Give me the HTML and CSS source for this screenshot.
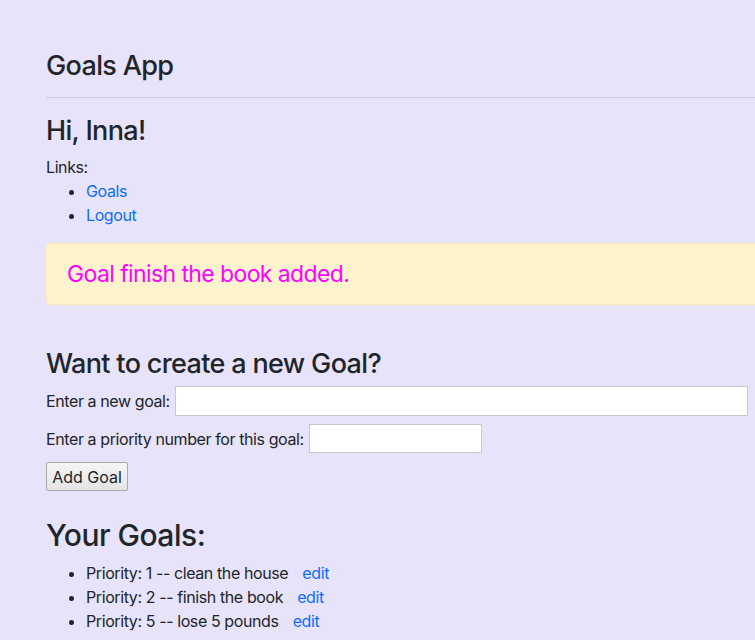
FILE: index.html
```html
<!DOCTYPE html>
<html lang="en">
<head>
<meta charset="utf-8">
<title>Goals App</title>
<link rel="stylesheet" href="styles.css">
</head>
<body>
<div class="page">
  <header class="header">
    <div class="brand">Goals App</div>
  </header>
  <hr class="rule">
  <h2 class="greeting">Hi, Inna!</h2>
  <div class="links-label">Links:</div>
  <ul class="list">
    <li><a href="#">Goals</a></li>
    <li><a href="#">Logout</a></li>
  </ul>
  <div class="alert">Goal finish the book added.</div>
  <h2 class="section-title">Want to create a new Goal?</h2>
  <form class="goal-form">
    <div class="form-row">
      <label for="goal">Enter a new goal:</label>
      <input id="goal" class="input input-goal" type="text">
    </div>
    <div class="form-row">
      <label for="priority">Enter a priority number for this goal:</label>
      <input id="priority" class="input input-priority" type="text">
    </div>
    <button type="button" class="btn">Add Goal</button>
  </form>
  <h1 class="goals-title">Your Goals:</h1>
  <ul class="list goals">
    <li>Priority: 1 -- clean the house <a class="edit" href="#">edit</a></li>
    <li>Priority: 2 -- finish the book <a class="edit" href="#">edit</a></li>
    <li>Priority: 5 -- lose 5 pounds <a class="edit" href="#">edit</a></li>
  </ul>
</div>
</body>
</html>
```

FILE: styles.css
```css
html, body {
  margin: 0;
  padding: 0;
  background: #e6e3fa;
  overflow: hidden;
}
body {
  font-family: Inter, "Noto Sans", sans-serif;
  font-size: 16px;
  line-height: 1.5;
  letter-spacing: -0.4px;
  color: #212529;
}
.page {
  padding: 50px 0 0 46px;
}
.brand {
  font-size: 27px;
  line-height: 32px;
  font-weight: 500;
  letter-spacing: -0.65px;
}
.rule {
  margin: 15px 0 17px 0;
  border: 0;
  border-top: 1px solid #cfcbe3;
  width: 760px;
}
.greeting {
  font-size: 27px;
  line-height: 32px;
  font-weight: 500;
  letter-spacing: -0.65px;
  margin: 0 0 8px 0;
}
.list {
  margin: 0 0 16px 0;
  padding-left: 40px;
}
a {
  color: #0d6efd;
  text-decoration: none;
}
.alert {
  width: 760px;
  box-sizing: border-box;
  background: #fff3cd;
  border: 1px solid #ffecb5;
  border-right: 0;
  border-radius: 5px 0 0 5px;
  padding: 15px 20px;
  font-size: 23px;
  line-height: 30px;
  letter-spacing: -0.6px;
  color: #ff00ff;
  margin: 0 0 43px 0;
}
.section-title {
  font-size: 27px;
  line-height: 32px;
  font-weight: 500;
  letter-spacing: -0.65px;
  margin: 0 0 6px 0;
}
.goal-form {
  display: flex;
  flex-direction: column;
  align-items: flex-start;
  gap: 8px;
}
.form-row {
  display: flex;
  align-items: center;
  gap: 5px;
}
.input {
  box-sizing: border-box;
  height: 30px;
  border: 1px solid #c8c8c8;
  background: #fff;
  margin: 0;
  padding: 2px 4px;
  font: inherit;
}
.input-goal { width: 573px; }
.input-priority { width: 173px; height: 29px; }
.btn {
  margin-top: 1px;
  box-sizing: border-box;
  height: 29px;
  width: 82px;
  padding: 0;
  font: inherit;
  font-size: 16px;
  color: #212529;
  background: linear-gradient(#f6f6f6, #e4e4e4);
  border: 1px solid #a9a9a9;
  border-radius: 2px;
}
.goals-title {
  font-size: 30px;
  line-height: 36px;
  font-weight: 500;
  letter-spacing: -0.5px;
  margin: 26px 0 8px 0;
}
.edit { margin-left: 10px; }
```
